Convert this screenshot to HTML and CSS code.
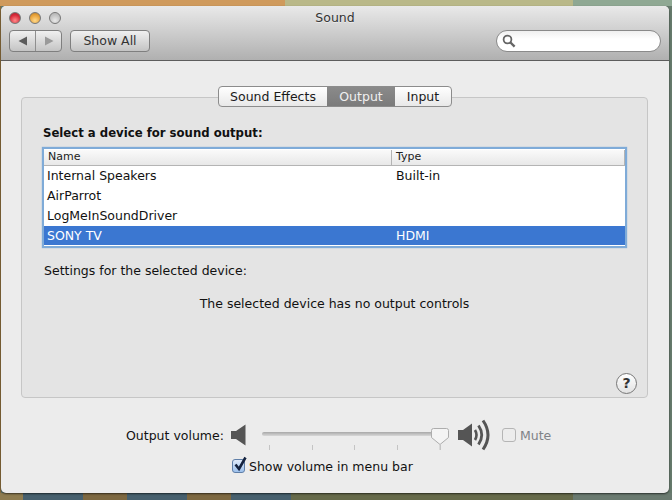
FILE: index.html
```html
<!DOCTYPE html>
<html lang="en">
<head>
    <meta charset="UTF-8">
    <title>Sound</title>
    <link rel="stylesheet" href="styles.css">
</head>
<body>
    <div class="window">
        <div class="toolbar">
            <div class="titlebar">
                <div class="lights">
                    <span class="light red"></span>
                    <span class="light amber"></span>
                    <span class="light off"></span>
                </div>
                <div class="title">Sound</div>
            </div>
            <div class="tools">
                <div class="nav">
                    <span class="nav-part back"><svg width="10" height="10" viewBox="0 0 10 10"><path d="M0.5 5L9 0.5V9.5Z" fill="#5c5c5c"/></svg></span>
                    <span class="nav-part"><svg width="10" height="10" viewBox="0 0 10 10"><path d="M9.5 5L1 0.5V9.5Z" fill="#9a9a9a"/></svg></span>
                </div>
                <div class="show-all">Show All</div>
                <div class="search">
                    <svg width="14" height="14" viewBox="0 0 14 14"><circle cx="5.5" cy="5.5" r="3.9" fill="none" stroke="#666" stroke-width="1.8"/><path d="M8.5 8.5L12.6 12.6" stroke="#666" stroke-width="2.4"/></svg>
                </div>
            </div>
        </div>

        <div class="content">
            <div class="tabs">
                <div class="tab">Sound Effects</div>
                <div class="tab active">Output</div>
                <div class="tab">Input</div>
            </div>

            <div class="group">
                <h2>Select a device for sound output:</h2>
                <div class="device-list">
                    <div class="list-head">
                        <div class="head-name">Name</div>
                        <div class="head-type">Type</div>
                    </div>
                    <div class="row"><span>Internal Speakers</span><span>Built-in</span></div>
                    <div class="row"><span>AirParrot</span><span></span></div>
                    <div class="row"><span>LogMeInSoundDriver</span><span></span></div>
                    <div class="row selected"><span>SONY TV</span><span>HDMI</span></div>
                </div>
                <div class="settings-label">Settings for the selected device:</div>
                <div class="no-controls">The selected device has no output controls</div>
                <div class="help">?</div>
            </div>

            <div class="volume">
                <span class="volume-label">Output volume:</span>
                <svg class="speaker" width="15" height="22" viewBox="0 0 15 22"><path d="M0 7H5L14.5 0.5V21.5L5 15H0Z" fill="#555"/></svg>
                <div class="slider">
                    <div class="track"></div>
                    <div class="ticks"><i></i><i></i><i></i><i></i><i></i></div>
                    <svg class="knob" width="18" height="24" viewBox="0 0 18 24"><path d="M2.5 0.5H15.5Q17.5 0.5 17.5 2.5V9.5L9 16.5L0.5 9.5V2.5Q0.5 0.5 2.5 0.5Z" fill="#f4f4f4" stroke="#adadad"/><path d="M9 16.5V22" stroke="#c4c4c4"/></svg>
                </div>
                <svg class="speaker-loud" width="34" height="32" viewBox="0 0 34 32"><path d="M0 11H5L14 4.5V27.5L5 21H0Z" fill="#555"/><path d="M17 11Q20 16 17 21" fill="none" stroke="#555" stroke-width="2.6"/><path d="M20.5 6.5Q27 16 20.5 25.5" fill="none" stroke="#555" stroke-width="2.8"/><path d="M25 1.5Q35 16 25 30.5" fill="none" stroke="#555" stroke-width="3"/></svg>
                <span class="mute-box"></span>
                <span class="mute-label">Mute</span>
            </div>

            <div class="menu-option">
                <span class="check">
                    <svg width="16" height="17" viewBox="0 0 16 17"><path d="M3.5 8.5L7 13L13.5 1.5" fill="none" stroke="#14233f" stroke-width="2.6"/></svg>
                </span>
                <span>Show volume in menu bar</span>
            </div>
        </div>
    </div>
</body>
</html>
```

FILE: styles.css
```css
html, body {
    margin: 0;
    height: 100%;
}

body {
    box-sizing: border-box;
    height: 500px;
    padding: 6px 3px 7px 1px;
    overflow: hidden;
    font-family: "DejaVu Sans", sans-serif;
    font-size: 12.5px;
    color: #111;
    background:
        linear-gradient(90deg, #cf9a5c 285px, #b9b888 285px, #b9b888 573px, #8fa893 573px) 0 0 / 100% 6px no-repeat,
        linear-gradient(90deg, #8e7c50 23px, #47606e 23px, #47606e 83px, #7d6841 83px, #7d6841 127px, #47606e 127px, #47606e 187px, #7d6841 187px, #7d6841 231px, #47606e 231px, #47606e 291px, #666a4a 291px, #666a4a 573px, #6a7a70 573px) 0 100% / 100% 7px no-repeat,
        linear-gradient(90deg, #8a6c3c 1px, #667a6c 1px);
}

.window {
    height: 100%;
    border-radius: 5px;
    background-color: #ececec;
    box-shadow: 0 1px 2px rgba(0, 0, 0, 0.6);
    overflow: hidden;
}

.toolbar {
    box-sizing: border-box;
    height: 55px;
    padding: 0 8px 0 8px;
    background: linear-gradient(#e9e9e9, #b0b0b0);
    border-bottom: 1px solid #5d5d5d;
}

.titlebar {
    display: grid;
    grid-template-columns: 1fr auto 1fr;
    align-items: center;
    height: 24px;
}

.lights {
    display: flex;
    gap: 8px;
    padding-left: 0;
}

.light {
    width: 12px;
    height: 12px;
    border-radius: 50%;
    border: 0.5px solid #777;
    box-sizing: border-box;
}

.red {
    background: radial-gradient(circle at 50% 75%, #ff8a8a, #d92a3a 60%, #a81a28);
}

.amber {
    background: radial-gradient(circle at 50% 75%, #ffd98a, #e8a23a 60%, #b87a20);
}

.off {
    background: radial-gradient(circle at 50% 75%, #e8e8e8, #bcbcbc 70%);
}

.title {
    grid-column: 2;
    margin-top: -2px;
    color: #333;
    text-shadow: 0 1px 0 rgba(255, 255, 255, 0.5);
}

.tools {
    display: flex;
    align-items: stretch;
    height: 22px;
}

.nav {
    display: flex;
    box-sizing: border-box;
    width: 53px;
    border: 1px solid #7f7f7f;
    border-radius: 4px;
    background: linear-gradient(#f0f0f0, #c4c4c4);
}

.nav-part {
    flex: 1;
    display: flex;
    align-items: center;
    justify-content: center;
}

.back {
    border-right: 1px solid #8f8f8f;
}

.show-all {
    box-sizing: border-box;
    width: 80px;
    margin-left: 8px;
    border: 1px solid #7f7f7f;
    border-radius: 4px;
    background: linear-gradient(#f0f0f0, #c4c4c4);
    color: #333;
    line-height: 20px;
    text-align: center;
}

.search {
    box-sizing: border-box;
    display: flex;
    align-items: center;
    width: 165px;
    margin-left: auto;
    margin-right: 0;
    padding-left: 5px;
    border: 1px solid #8a8a8a;
    border-radius: 11px;
    background: linear-gradient(#f0f0f0, #ffffff 40%);
}

.content {
    padding: 25px 20px 0 20px;
}

.tabs {
    position: relative;
    display: flex;
    width: 234px;
    height: 21px;
    box-sizing: border-box;
    margin: 0 auto -10px;
    border: 1px solid #8c8c8c;
    border-radius: 4px;
    background: linear-gradient(#ffffff, #e8e8e8);
    overflow: hidden;
}

.tab {
    line-height: 19px;
    text-align: center;
    color: #1a1a1a;
}

.tab:nth-child(1) {
    width: 108px;
}

.tab:nth-child(2) {
    width: 68px;
}

.tab:nth-child(3) {
    flex: 1;
}

.active {
    background: linear-gradient(#8a8a8a, #7b7b7b);
    color: #f0f0f0;
}

.group {
    box-sizing: border-box;
    display: flex;
    flex-direction: column;
    width: 627px;
    height: 301px;
    padding: 28px 0 0 21px;
    border: 1px solid #c6c6c6;
    border-radius: 4px;
    background-color: #e4e4e4;
}

h2 {
    margin: 0 0 8px;
    font-size: 11.7px;
    line-height: 15px;
    font-weight: bold;
    color: #111;
}

.device-list {
    box-sizing: border-box;
    width: 581px;
    margin-left: 1px;
    border-top: 1px solid #fff;
    border-bottom: 1px solid #fff;
    background-color: #fff;
    box-shadow: 0 0 1px 2px #7fabd8;
}

.list-head {
    display: flex;
    height: 16px;
    box-sizing: border-box;
    border-bottom: 1px solid #b4b4b4;
    background: linear-gradient(#fafafa, #e8e8e8);
    box-shadow: inset -1px 0 0 #b4b4b4;
    font-size: 11px;
    line-height: 14px;
    color: #222;
}

.head-name {
    width: 347px;
    padding-left: 4px;
    box-sizing: border-box;
}

.head-type {
    padding-left: 4px;
    border-left: 1px solid #b4b4b4;
}

.row {
    display: grid;
    grid-template-columns: 349px 1fr;
    height: 20px;
    padding-left: 3px;
    line-height: 20px;
}

.selected {
    height: 19px;
    background-color: #3b77d1;
    color: #fff;
    line-height: 20px;
}

.settings-label {
    margin: 17px 0 0 1px;
    line-height: 15px;
}

.no-controls {
    margin: 18px 21px 0 0;
    line-height: 15px;
    text-align: center;
}

.help {
    box-sizing: border-box;
    width: 21px;
    height: 21px;
    margin: auto 10px 3px auto;
    border: 1px solid #777;
    border-radius: 50%;
    background: linear-gradient(#fff, #e2e2e2);
    font-weight: bold;
    font-size: 14px;
    line-height: 19px;
    text-align: center;
    color: #333;
}

.volume {
    display: flex;
    align-items: center;
    height: 32px;
    margin-top: 21px;
    padding-left: 105px;
}

.speaker {
    margin-left: 7px;
}

.slider {
    position: relative;
    width: 187px;
    height: 32px;
    margin-left: 16px;
}

.track {
    position: absolute;
    left: 0;
    right: 8px;
    top: 13px;
    height: 4px;
    border-radius: 3px;
    background: linear-gradient(#a8a8a8, #d8d8d8);
}

.ticks {
    position: absolute;
    left: 7px;
    right: 8px;
    top: 26px;
    display: flex;
    justify-content: space-between;
}

.ticks i {
    width: 1px;
    height: 5px;
    background-color: #c4c4c4;
}

.knob {
    position: absolute;
    right: 0;
    top: 9px;
}

.speaker-loud {
    margin-left: 9px;
}

.mute-box {
    box-sizing: border-box;
    width: 14px;
    height: 14px;
    margin-left: 10px;
    border: 1px solid #b5b5b5;
    border-radius: 3px;
    background-color: #ececec;
}

.mute-label {
    margin-left: 4px;
    color: #7f8287;
}

.menu-option {
    display: flex;
    align-items: center;
    height: 18px;
    margin-top: 6px;
    padding-left: 211px;
    gap: 4px;
}

.check {
    position: relative;
    box-sizing: border-box;
    width: 13px;
    height: 14px;
    border: 1px solid #5f7fa8;
    border-radius: 3px;
    background: linear-gradient(#dfeafa, #9cc0ec);
}

.check svg {
    position: absolute;
    left: -1px;
    top: -4px;
}
```
